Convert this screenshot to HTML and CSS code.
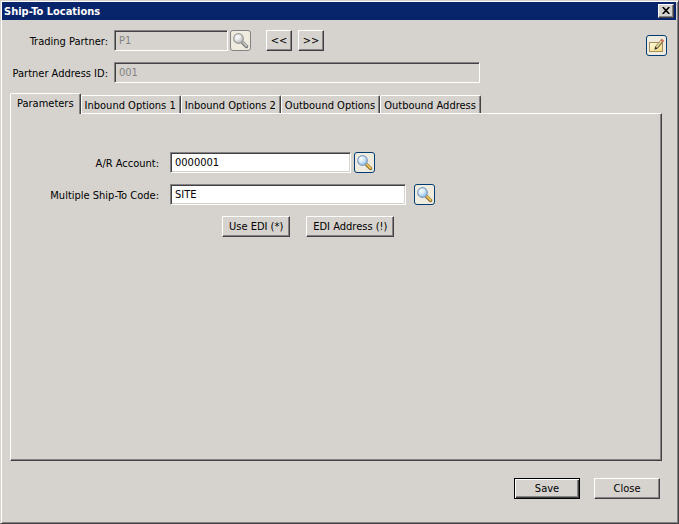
FILE: index.html
```html
<!doctype html>
<html lang="en">
<head>
    <meta charset="utf-8" />
    <meta name="viewport" content="width=device-width, initial-scale=1.0">
    <title>Ship-To Locations</title>
    <link rel="stylesheet" href="styles.css">
</head>
<body>
    <!-- shared gradients and the magnifier symbol -->
    <svg class="defs" aria-hidden="true">
        <defs>
            <radialGradient id="glass" cx="0.35" cy="0.3" r="0.75">
                <stop offset="0" stop-color="#ffffff" />
                <stop offset="0.5" stop-color="#cfe8fa" />
                <stop offset="1" stop-color="#86b8e6" />
            </radialGradient>
            <linearGradient id="paper" x1="0" y1="0" x2="1" y2="1">
                <stop offset="0" stop-color="#fffce6" />
                <stop offset="1" stop-color="#f5d978" />
            </linearGradient>
            <symbol id="magnifier" viewBox="0 0 17 17">
                <path d="M10.5 10.5 L14.5 14.5" stroke="#8a7440" stroke-width="3.5" stroke-linecap="round" />
                <path d="M10.8 10.3 L14.5 14" stroke="#eec24c" stroke-width="1.8" stroke-linecap="round" />
                <circle cx="6.5" cy="6.5" r="4.8" fill="url(#glass)" stroke="#7f9dc4" stroke-width="1.2" />
            </symbol>
        </defs>
    </svg>

    <form class="dialog" onsubmit="return false;">
        <div class="title-bar">
            <h1 class="title">Ship-To Locations</h1>
            <button class="close-box" type="button" aria-label="Close window">
                <svg width="8" height="7" viewBox="0 0 8 7"><path d="M0.7 0 L7.3 7 M7.3 0 L0.7 7" stroke="#000" stroke-width="1.6" /></svg>
            </button>
        </div>

        <div class="header">
            <div class="header-fields">
                <div class="row">
                    <label class="header-label" for="partner">Trading Partner:</label>
                    <input class="field partner" type="text" id="partner" value="P1" disabled>
                    <button class="icon-button lookup-partner" type="button" aria-label="Look up trading partner" disabled>
                        <svg width="17" height="17"><use href="#magnifier" /></svg>
                    </button>
                    <button class="button nav" type="button" aria-label="Previous">&lt;&lt;</button>
                    <button class="button nav" type="button" aria-label="Next">&gt;&gt;</button>
                </div>
                <div class="row">
                    <label class="header-label" for="address">Partner Address ID:</label>
                    <input class="field address" type="text" id="address" value="001" disabled>
                </div>
            </div>
            <button class="icon-button note" type="button" aria-label="Notes">
                <svg width="17" height="17" viewBox="0 0 17 17">
                    <rect x="1.5" y="5.5" width="13" height="9" fill="url(#paper)" stroke="#a5905a" />
                    <path d="M8.5 10.5 L13.5 4.5" stroke="#77704f" stroke-width="3.5" />
                    <path d="M8.5 10 L13.5 4" stroke="#f0dc98" stroke-width="1.6" />
                    <path d="M13.5 4.5 L15 2.7" stroke="#d0705f" stroke-width="3.5" />
                    <path d="M6.5 12.7 L7.2 9.5 L9.7 11.7 Z" fill="#2c2c30" />
                </svg>
            </button>
        </div>

        <div class="tabs" role="tablist">
            <button class="tab active" type="button" role="tab" aria-selected="true">Parameters</button>
            <button class="tab" type="button" role="tab">Inbound Options 1</button>
            <button class="tab" type="button" role="tab">Inbound Options 2</button>
            <button class="tab" type="button" role="tab">Outbound Options</button>
            <button class="tab" type="button" role="tab">Outbound Address</button>
        </div>

        <div class="panel" role="tabpanel">
            <div class="row">
                <label class="panel-label" for="account">A/R Account:</label>
                <input class="field account" type="text" id="account" value="0000001">
                <button class="icon-button lookup-near" type="button" aria-label="Look up account">
                    <svg width="17" height="17"><use href="#magnifier" /></svg>
                </button>
            </div>
            <div class="row">
                <label class="panel-label" for="code">Multiple Ship-To Code:</label>
                <input class="field code" type="text" id="code" value="SITE">
                <button class="icon-button lookup-far" type="button" aria-label="Look up ship-to code">
                    <svg width="17" height="17"><use href="#magnifier" /></svg>
                </button>
            </div>
            <div class="row edi-row">
                <button class="button" type="button">Use EDI (*)</button>
                <button class="button" type="button">EDI Address (!)</button>
            </div>
        </div>

        <div class="footer">
            <button class="button wide default" type="submit">Save</button>
            <button class="button wide" type="button">Close</button>
        </div>
    </form>
</body>
</html>
```
FILE: styles.css
```css
* {
    box-sizing: border-box;
}

body {
    margin: 0;
    background-color: #d6d3ce;
}

body, button, input {
    font-family: Tahoma, "DejaVu Sans Condensed", "DejaVu Sans", sans-serif;
    font-size: 11px;
    line-height: 13px;
    color: #000;
}

.defs {
    display: block;
    width: 0;
    height: 0;
}

.dialog {
    display: flex;
    flex-direction: column;
    min-height: 100vh;
    padding: 1px 1px 0 0;
    border: 1px solid;
    border-color: #d6d3ce #424142 #424142 #d6d3ce;
    box-shadow: inset 1px 1px #fff, inset -1px -1px #848284;
}

.title-bar {
    display: flex;
    align-items: center;
    justify-content: space-between;
    height: 18px;
    margin: 0 1px;
    padding: 0 2px;
    background-color: #08246b;
}

.title {
    margin: 0;
    font-size: 11px;
    font-weight: bold;
    color: #fff;
}

/* raised 3D edge */
.button, .close-box {
    border: 1px solid;
    border-color: #fff #424142 #424142 #fff;
    box-shadow: inset -1px -1px #848284;
    background-color: #d6d3ce;
}

.close-box {
    display: flex;
    align-items: center;
    justify-content: center;
    width: 16px;
    height: 14px;
    padding: 0 1px 1px 0;
}

.header {
    display: flex;
    justify-content: space-between;
    align-items: flex-start;
    padding: 10px 10px 0 0;
}

.header-fields {
    display: flex;
    flex-direction: column;
    gap: 11px;
}

.row {
    display: flex;
    align-items: center;
}

.header-label, .panel-label {
    padding-top: 1px;
    text-align: right;
    white-space: nowrap;
}

.header-label {
    width: 113px;
    padding-right: 6px;
}

.panel-label {
    width: 159px;
    padding-right: 11px;
}

/* sunken text box */
.field {
    height: 21px;
    padding: 0 4px;
    border: 1px solid;
    border-color: #848284 #fff #fff #848284;
    box-shadow: inset 1px 1px #424142, inset -1px -1px #d6d3ce;
    border-radius: 0;
    background-color: #fff;
    outline: none;
}

.field:disabled {
    background-color: #d6d3ce;
    color: #848284;
}

.partner {
    width: 114px;
}

.address {
    width: 366px;
}

.account {
    width: 181px;
}

.code {
    width: 236px;
}

.icon-button {
    display: flex;
    align-items: center;
    justify-content: center;
    width: 21px;
    height: 21px;
    padding: 0;
    border: 1px solid #003c74;
    border-radius: 3px;
    background-color: #efebde;
}

.icon-button:disabled {
    border-color: #848284;
}

.icon-button:disabled svg {
    filter: grayscale(1);
}

.lookup-partner {
    margin-left: 2px;
}

.lookup-near {
    margin-left: 3px;
}

.lookup-far {
    margin-left: 8px;
}

.note {
    margin-top: 5px;
}

.button {
    height: 21px;
    padding: 0 6px 1px;
    white-space: nowrap;
}

.nav {
    width: 26px;
    padding: 0 0 1px;
    margin-left: 6px;
}

.icon-button + .nav {
    margin-left: 15px;
}

.tabs {
    display: flex;
    align-items: flex-end;
    margin: 10px 0 0 9px;
}

.tab {
    height: 18px;
    padding: 1px 4px 0 3px;
    border: 1px solid;
    border-color: #fff #424142 transparent #fff;
    border-bottom: 0;
    border-radius: 2px 2px 0 0;
    box-shadow: inset -1px 0 #848284;
    background-color: #d6d3ce;
    white-space: nowrap;
}

.tab.active {
    z-index: 1;
    height: 21px;
    margin-bottom: -1px;
    padding: 0 6px 2px;
}

.panel {
    display: flex;
    flex: 1;
    flex-direction: column;
    gap: 11px;
    margin: 0 15px 0 9px;
    padding-top: 38px;
    border: 1px solid;
    border-color: #fff #424142 #424142 #fff;
    box-shadow: inset -1px -1px #848284;
}

.edi-row {
    gap: 16px;
    padding-left: 211px;
}

.footer {
    display: flex;
    justify-content: flex-end;
    gap: 14px;
    padding: 17px 17px 24px;
}

.wide {
    width: 66px;
}

.default {
    border-color: #000;
    box-shadow: inset 1px 1px #fff, inset -1px -1px #424142, inset -2px -2px #848284;
}
```
